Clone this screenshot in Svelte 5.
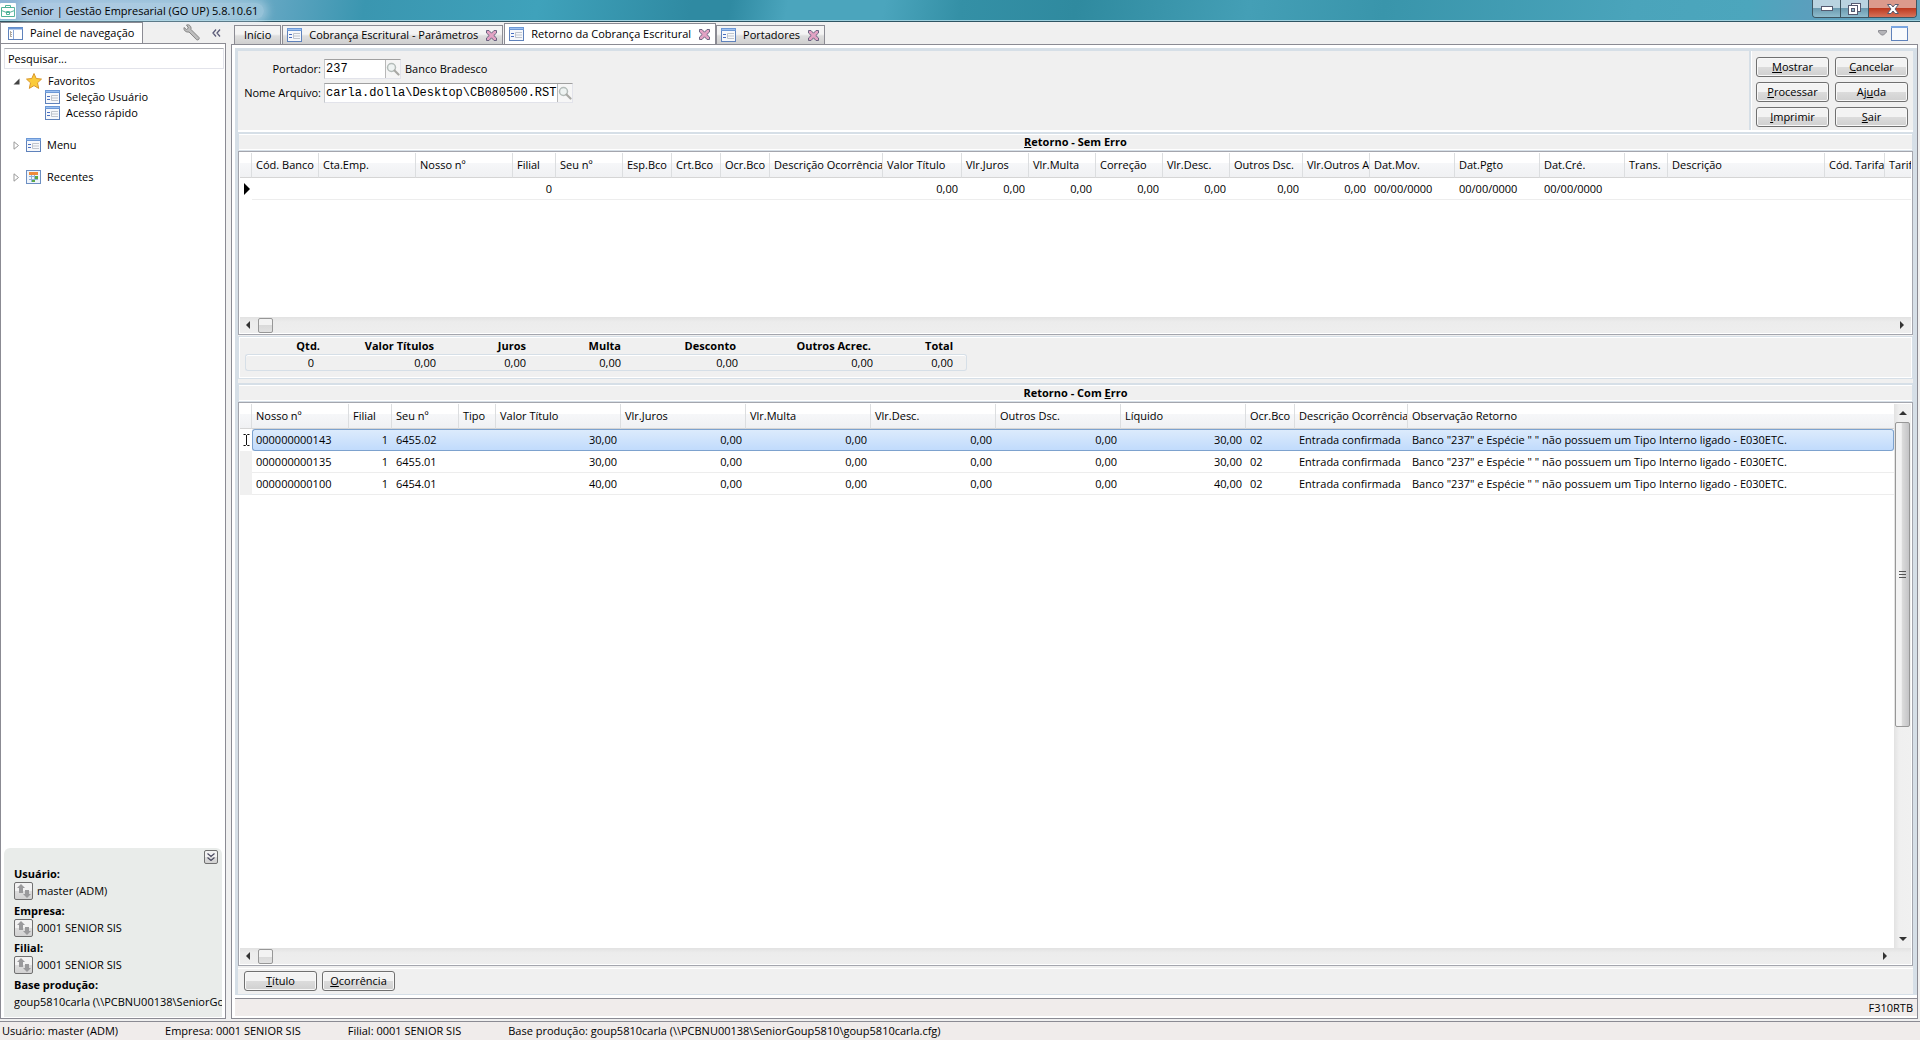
<script lang="ts">
    type Column = { label: string; width: number | null; align?: "right" };

    const tabs = [
        { label: "Início", icon: false, active: false },
        { label: "Cobrança Escritural - Parâmetros", icon: true, active: false },
        { label: "Retorno da Cobrança Escritural", icon: true, active: true },
        { label: "Portadores", icon: true, active: false },
    ];

    // label before the access key, the key, label after it
    const actions = [
        ["", "M", "ostrar"],
        ["", "C", "ancelar"],
        ["", "P", "rocessar"],
        ["Aj", "u", "da"],
        ["", "I", "mprimir"],
        ["", "S", "air"],
    ];

    const okColumns: Column[] = [
        { label: "Cód. Banco", width: 67 },
        { label: "Cta.Emp.", width: 97 },
        { label: "Nosso nº", width: 97 },
        { label: "Filial", width: 43, align: "right" },
        { label: "Seu nº", width: 67 },
        { label: "Esp.Bco", width: 49 },
        { label: "Crt.Bco", width: 49 },
        { label: "Ocr.Bco", width: 49 },
        { label: "Descrição Ocorrência", width: 113 },
        { label: "Valor Título", width: 79, align: "right" },
        { label: "Vlr.Juros", width: 67, align: "right" },
        { label: "Vlr.Multa", width: 67, align: "right" },
        { label: "Correção", width: 67, align: "right" },
        { label: "Vlr.Desc.", width: 67, align: "right" },
        { label: "Outros Dsc.", width: 73, align: "right" },
        { label: "Vlr.Outros A", width: 67, align: "right" },
        { label: "Dat.Mov.", width: 85 },
        { label: "Dat.Pgto", width: 85 },
        { label: "Dat.Cré.", width: 85 },
        { label: "Trans.", width: 43 },
        { label: "Descrição", width: 157 },
        { label: "Cód. Tarifa", width: 60 },
        { label: "Tarif", width: null },
    ];
    const okRow = ["", "", "", "0", "", "", "", "", "", "0,00", "0,00", "0,00", "0,00", "0,00", "0,00", "0,00",
        "00/00/0000", "00/00/0000", "00/00/0000", "", "", "", ""];

    const errorColumns: Column[] = [
        { label: "Nosso nº", width: 97 },
        { label: "Filial", width: 43, align: "right" },
        { label: "Seu nº", width: 67 },
        { label: "Tipo", width: 37 },
        { label: "Valor Título", width: 125, align: "right" },
        { label: "Vlr.Juros", width: 125, align: "right" },
        { label: "Vlr.Multa", width: 125, align: "right" },
        { label: "Vlr.Desc.", width: 125, align: "right" },
        { label: "Outros Dsc.", width: 125, align: "right" },
        { label: "Líquido", width: 125, align: "right" },
        { label: "Ocr.Bco", width: 49 },
        { label: "Descrição Ocorrência", width: 113 },
        { label: "Observação Retorno", width: null },
    ];
    const note = 'Banco "237" e Espécie " " não possuem um Tipo Interno ligado - E030ETC.';
    const errorRow = (id: string, seu: string, value: string) =>
        [id, "1", seu, "", value, "0,00", "0,00", "0,00", "0,00", value, "02", "Entrada confirmada", note];
    const errorRows = [
        errorRow("000000000143", "6455.02", "30,00"),
        errorRow("000000000135", "6455.01", "30,00"),
        errorRow("000000000100", "6454.01", "40,00"),
    ];

    const totals = [
        { label: "Qtd.", value: "0", width: 77 },
        { label: "Valor Títulos", value: "0,00", width: 122 },
        { label: "Juros", value: "0,00", width: 90 },
        { label: "Multa", value: "0,00", width: 95 },
        { label: "Desconto", value: "0,00", width: 117 },
        { label: "Outros Acrec.", value: "0,00", width: 135 },
        { label: "Total", value: "0,00", width: 86 },
    ];

    const session = [
        { label: "Usuário:", value: "master (ADM)" },
        { label: "Empresa:", value: "0001 SENIOR SIS" },
        { label: "Filial:", value: "0001 SENIOR SIS" },
    ];

    let search = $state("Pesquisar...");
    let holder = $state("237");
    let fileName = $state("carla.dolla\\Desktop\\CB080500.RST");
</script>

{#snippet formIcon()}
    <svg viewBox="0 0 15 14" width="15" height="14">
        <rect x="0.5" y="0.5" width="14" height="13" fill="#f6f8fb" stroke="#5f82bb" />
        <rect x="0" y="0" width="15" height="3" fill="#6c98d6" />
        <path d="M1 1.5h13" stroke="#9cc0f0" />
        <path d="M2 6.5h3M2 9.5h3" stroke="#4a6fc0" />
        <path d="M13 5.5h-6.5v5h6.5M7 8h6" fill="none" stroke="#bfc4cc" />
    </svg>
{/snippet}

{#snippet closeIcon()}
    <svg viewBox="0 0 11 11" width="11" height="11">
        <path d="M0.5 0.5h2.5l2.5 2.7 2.5-2.7h2.5v2.5l-2.7 2.5 2.7 2.5v2.5h-2.5l-2.5-2.7-2.5 2.7h-2.5v-2.5l2.7-2.5-2.7-2.5z" fill="#e3a3c4" stroke="#5f5a78" stroke-width="0.9" />
    </svg>
{/snippet}

{#snippet lensIcon()}
    <svg viewBox="0 0 14 14" width="14" height="14">
        <circle cx="5.5" cy="5.5" r="4" fill="#eef3f2" stroke="#b4bcb9" stroke-width="1.5" />
        <path d="M8.5 8.5l4 4" stroke="#a8a8a4" stroke-width="2.2" stroke-linecap="round" />
    </svg>
{/snippet}

{#snippet swapIcon()}
    <svg viewBox="0 0 14 14" width="14" height="14">
        <path d="M4 0l4 4H6v5H2V4H0z" fill="#9a9a9c" />
        <path d="M10 14l-4-4h2V6h4v4h2z" fill="#9a9a9c" />
    </svg>
{/snippet}

{#snippet scrollbar()}
    <div class="hscroll">
        <svg viewBox="0 0 4 8" width="4" height="8"><path d="M4 0v8L0 4z" fill="#333" /></svg>
        <div class="thumb"></div>
        <svg viewBox="0 0 4 8" width="4" height="8"><path d="M0 0v8l4-4z" fill="#333" /></svg>
    </div>
{/snippet}

{#snippet grid(columns: Column[], rows: string[][], editing: boolean)}
    <table>
        <colgroup>
            <col class="gutter" />
            {#each columns as column}
                <col style={column.width ? `width: ${column.width}px` : ""} />
            {/each}
        </colgroup>
        <thead>
            <tr>
                <th></th>
                {#each columns as column}
                    <th scope="col">{column.label}</th>
                {/each}
            </tr>
        </thead>
        <tbody>
            {#each rows as row, r}
                <tr class:selected={editing && r === 0}>
                    <td class="marker">
                        {#if r === 0 && editing}
                            <svg viewBox="0 0 7 12" width="7" height="12"><path d="M0.5 0.5h2l1 1l1-1h2M3.5 1v10M0.5 11.5h2l1-1l1 1h2" fill="none" stroke="#111" /></svg>
                        {:else if r === 0}
                            <svg viewBox="0 0 7 12" width="7" height="12"><path d="M1 0l6 6l-6 6z" fill="#000" /></svg>
                        {/if}
                    </td>
                    {#each row as cell, c}
                        <td class:right={columns[c].align === "right"}>{cell}</td>
                    {/each}
                </tr>
            {/each}
        </tbody>
    </table>
{/snippet}

<div class="window">
    <header class="titlebar">
        <svg viewBox="0 0 16 16" width="16" height="16">
            <rect width="16" height="16" rx="1" fill="#fff" />
            <path d="M5.5 4.5v-2h5v2M1.5 4.5h13v9h-13zM1.5 7.5l5 2h3l5-2M6.5 8.5h3v3h-3z" fill="none" stroke="#4fb298" />
        </svg>
        <span class="caption">Senior | Gestão Empresarial (GO UP) 5.8.10.61</span>
        <div class="window-buttons">
            <button aria-label="Minimizar"><svg viewBox="0 0 12 5" width="12" height="5"><rect x="0.5" y="0.5" width="11" height="4" fill="#fff" stroke="#555a70" /></svg></button>
            <button aria-label="Restaurar">
                <svg viewBox="0 0 13 12" width="13" height="12">
                    <rect x="3.5" y="0.5" width="9" height="8" fill="#fff" stroke="#555a70" />
                    <rect x="0.5" y="2.5" width="9" height="9" fill="#fff" stroke="#555a70" />
                    <rect x="3.5" y="5.5" width="3" height="3" fill="#8fb4c4" stroke="#555a70" />
                </svg>
            </button>
            <button class="close" aria-label="Fechar"><svg viewBox="0 0 12 10" width="12" height="10"><path d="M0.5 0.5H4l2 2.5 2-2.5h3.5L8 5l3.5 4.5H8L6 7 4 9.5H0.5L4 5z" fill="#fff" stroke="#555a70" /></svg></button>
        </div>
    </header>

    <div class="workspace">
        <aside>
            <div class="nav-head">
                <div class="nav-tab">
                    <svg viewBox="0 0 15 13" width="15" height="13">
                        <rect x="0.5" y="0.5" width="14" height="12" fill="#fff" stroke="#5f82bb" />
                        <path d="M0 1.5h15" stroke="#6c98d6" stroke-width="2" />
                        <path d="M5.5 3v9" stroke="#8aa7d6" />
                        <path d="M2.5 4v6M2 5.5h2M2 7.5h2M2 9.5h2" stroke="#b0aaa0" />
                    </svg>
                    Painel de navegação
                </div>
                <div class="nav-tools">
                    <svg viewBox="0 0 17 17" width="17" height="17">
                        <path d="M3.5 1c2.5-1 5 1 4.5 4.500l8 8c.8 1.500-.8 3-2.300 2.300L6 8C3 8.500.5 6.500 1 3.500l2.500 2L5.500 4z" fill="#bdbdbd" stroke="#858585" />
                    </svg>
                    <svg viewBox="0 0 9 8" width="9" height="8"><path d="M4 0.5l-3 3.5l3 3.5M8 0.5l-3 3.5l3 3.5" fill="none" stroke="#5b5b78" stroke-width="1.3" /></svg>
                </div>
            </div>
            <nav>
                <input class="search" aria-label="Pesquisar" bind:value={search} />
                <ul class="tree">
                    <li>
                        <div class="node">
                            <svg viewBox="0 0 7 7" width="7" height="7"><path d="M6.5 0.5v6h-6z" fill="#444" /></svg>
                            <svg viewBox="0 0 16 16" width="16" height="16"><path d="M8 .5l2.2 5 5.3.6-4 3.7 1.2 5.6L8 12.6l-4.7 2.8 1.2-5.6-4-3.7 5.3-.6z" fill="#fbcb3a" stroke="#d9962a" /></svg>
                            Favoritos
                        </div>
                        <ul>
                            <li class="leaf">{@render formIcon()}Seleção Usuário</li>
                            <li class="leaf">{@render formIcon()}Acesso rápido</li>
                        </ul>
                    </li>
                    <li>
                        <div class="node">
                            <svg viewBox="0 0 7 9" width="7" height="9"><path d="M1 0.8v7.4l4.5-3.7z" fill="#fff" stroke="#999" /></svg>
                            {@render formIcon()}
                            Menu
                        </div>
                    </li>
                    <li>
                        <div class="node">
                            <svg viewBox="0 0 7 9" width="7" height="9"><path d="M1 0.8v7.4l4.5-3.7z" fill="#fff" stroke="#999" /></svg>
                            <svg viewBox="0 0 15 14" width="15" height="14">
                                <rect x="0.5" y="0.5" width="14" height="13" fill="#eef4fb" stroke="#6d8fc2" />
                                <rect x="3" y="2" width="9" height="3" fill="#ee8b3a" />
                                <path d="M3 6.5h9M3 9.5h9M5.5 5v7M8.5 5v7" stroke="#8fb0d8" />
                                <path d="M9 6h3v3h-3zM6 10h3v2h-3z" fill="#5aa845" />
                            </svg>
                            Recentes
                        </div>
                    </li>
                </ul>
                <section class="session">
                    <button class="collapse" aria-label="Recolher">
                        <svg viewBox="0 0 8 8" width="8" height="8"><path d="M0.5 0.5l3.5 3l3.5-3M0.5 4.5l3.5 3l3.5-3" fill="none" stroke="#4a4a60" stroke-width="1.2" /></svg>
                    </button>
                    <dl>
                        {#each session as item}
                            <dt>{item.label}</dt>
                            <dd><button class="swap" aria-label="Trocar">{@render swapIcon()}</button>{item.value}</dd>
                        {/each}
                        <dt>Base produção:</dt>
                        <dd>goup5810carla (\\PCBNU00138\SeniorGou</dd>
                    </dl>
                </section>
            </nav>
        </aside>

        <main>
            <div class="tabs">
                {#each tabs as tab}
                    <div class="tab" class:active={tab.active}>
                        {#if tab.icon}{@render formIcon()}{/if}
                        <span>{tab.label}</span>
                        {#if tab.icon}<button class="tab-close" aria-label="Fechar aba">{@render closeIcon()}</button>{/if}
                    </div>
                {/each}
                <div class="tab-tools">
                    <svg viewBox="0 0 9 6" width="9" height="6"><path d="M0.5 0.5h8v1.5l-3 3h-2l-3-3z" fill="#b4b4b8" stroke="#8c8c92" /></svg>
                    <svg viewBox="0 0 17 15" width="17" height="15"><rect x="0.5" y="0.5" width="16" height="14" fill="#f8fafc" stroke="#5f82bb" /><path d="M0 1h17" stroke="#7aa5e0" stroke-width="2" /></svg>
                </div>
            </div>

            <div class="page">
                <div class="form">
                    <div class="filters">
                        <div class="fields">
                            <label for="holder">Portador:</label>
                            <div class="row">
                                <div class="lookup short">
                                    <input id="holder" bind:value={holder} />
                                    <button aria-label="Procurar portador">{@render lensIcon()}</button>
                                </div>
                                <span>Banco Bradesco</span>
                            </div>
                            <label for="file">Nome Arquivo:</label>
                            <div class="lookup long">
                                <input id="file" bind:value={fileName} />
                                <button aria-label="Procurar arquivo">{@render lensIcon()}</button>
                            </div>
                        </div>
                        <div class="actions">
                            {#each actions as [before, key, after]}
                                <button class="push">{before}<u>{key}</u>{after}</button>
                            {/each}
                        </div>
                    </div>

                    <h2><u>R</u>etorno - Sem Erro</h2>
                    <div class="grid ok">
                        <div class="view">{@render grid(okColumns, [okRow], false)}</div>
                        {@render scrollbar()}
                    </div>

                    <div class="totals">
                        <dl>
                            {#each totals as total}
                                <div style="width: {total.width}px">
                                    <dt class:long={total.label.length > 5}>{total.label}</dt>
                                    <dd>{total.value}</dd>
                                </div>
                            {/each}
                        </dl>
                    </div>

                    <h2>Retorno - Com <u>E</u>rro</h2>
                    <div class="grid errors">
                        <div class="body">
                            <div class="view">{@render grid(errorColumns, errorRows, true)}</div>
                            <div class="vscroll">
                                <svg viewBox="0 0 8 4" width="8" height="4"><path d="M0 4h8l-4-4z" fill="#333" /></svg>
                                <div class="vthumb">
                                    <svg viewBox="0 0 7 8" width="7" height="8"><path d="M0 0.5h7M0 3.5h7M0 6.5h7" stroke="#555" /></svg>
                                </div>
                                <svg viewBox="0 0 8 4" width="8" height="4"><path d="M0 0h8l-4 4z" fill="#333" /></svg>
                            </div>
                        </div>
                        {@render scrollbar()}
                    </div>

                    <div class="footer">
                        <button class="push"><u>T</u>ítulo</button>
                        <button class="push"><u>O</u>corrência</button>
                    </div>
                </div>
                <div class="form-status">F310RTB</div>
            </div>
        </main>
    </div>

    <footer class="statusbar">
        <span>Usuário: master (ADM)</span>
        <span>Empresa: 0001 SENIOR SIS</span>
        <span>Filial: 0001 SENIOR SIS</span>
        <span>Base produção: goup5810carla (\\PCBNU00138\SeniorGoup5810\goup5810carla.cfg)</span>
    </footer>
</div>

<style>
    :global(body) {
        margin: 0;
    }

    .window {
        display: flex;
        flex-direction: column;
        min-height: 100vh;
        background: #f0f0f0;
        color: #000;
        font: 11px/16px "Open Sans", "Noto Sans", sans-serif;
    }

    .window * {
        box-sizing: border-box;
    }

    svg {
        display: block;
        flex: none;
    }

    button,
    input {
        font: inherit;
        color: inherit;
        margin: 0;
        padding: 0;
    }

    ul,
    dl,
    dd,
    h2 {
        margin: 0;
        padding: 0;
        list-style: none;
    }

    /* Title bar */
    .titlebar {
        display: flex;
        align-items: center;
        gap: 5px;
        height: 22px;
        border-bottom: 1px solid #2f5563;
        box-shadow: inset 0 -1px #9ccfdd;
        background: linear-gradient(100deg, #8fb5d6 0, #86b6d0 10%, #5ba3bf 15%, #3a96b0 19%, #3fa2bb 28%, #2f8aa2 36%, #2f8aa2 38%, #4ba5bd 41%, #4ba5bd 46%, #3490a6 50%, #2f8a9f 56%, #449fb6 65%, #3995ab 72%, #4aa4bb 85%, #4ca6bd 91%, #5a9fbd 94%, #64a4be 100%);
    }

    .caption {
        padding-right: 6px;
        border-radius: 8px;
        background: rgba(220, 232, 248, 0.4);
        box-shadow: 0 0 8px 4px rgba(220, 232, 248, 0.4);
    }

    .window-buttons {
        display: flex;
        align-self: flex-start;
        margin: 0 3px 0 auto;
        height: 18px;
        border: 1px solid #3d5561;
        border-top: 0;
        border-radius: 0 0 4px 4px;
        overflow: hidden;
    }

    .window-buttons button {
        display: flex;
        align-items: center;
        justify-content: center;
        width: 28px;
        border: 0;
        border-right: 1px solid #3d5561;
        background: linear-gradient(#b9d3e0 45%, #6c9bb0 50%, #8fbccd);
    }

    .window-buttons .close {
        width: 47px;
        border-right: 0;
        background: linear-gradient(#dc9a8c 45%, #bd3a20 50%, #d6735a);
    }

    .workspace {
        display: flex;
        flex: 1;
        gap: 5px;
        padding-bottom: 2px;
    }

    /* Navigation panel */
    aside {
        display: flex;
        flex-direction: column;
        flex: none;
        width: 226px;
    }

    .nav-head {
        display: flex;
        align-items: center;
        justify-content: space-between;
        height: 21px;
    }

    .nav-tab {
        display: flex;
        flex: none;
        align-items: center;
        gap: 7px;
        width: 143px;
        height: 21px;
        padding-left: 7px;
        border: 1px solid #8b8b93;
        border-bottom: 0;
        background: #fff;
    }

    .nav-tools {
        display: flex;
        align-items: center;
        gap: 12px;
        padding-right: 5px;
    }

    nav {
        display: flex;
        flex: 1;
        flex-direction: column;
        border: 1px solid #8b8b93;
        padding: 4px 1px 1px 3px;
        background: #fff;
    }

    .search {
        height: 21px;
        padding: 0 3px;
        border: 1px solid #e2e3ea;
        border-top-color: #abadb3;
        outline: 0;
    }

    .tree {
        flex: 1;
        padding: 4px 8px 0 9px;
    }

    .tree > li {
        margin-bottom: 16px;
    }

    .node,
    .leaf {
        display: flex;
        align-items: center;
        gap: 6px;
        height: 16px;
    }

    .leaf {
        padding-left: 32px;
    }

    .session {
        position: relative;
        margin-right: 2px;
        padding: 18px 0 3px 10px;
        border-radius: 6px 6px 0 0;
        background: #e9ecea;
    }

    .collapse,
    .swap {
        display: flex;
        align-items: center;
        justify-content: center;
        border: 1px solid #707070;
        border-radius: 2px;
        background: linear-gradient(#f2f2f2 50%, #dddddd 50%, #d2d2d2);
    }

    .collapse {
        position: absolute;
        top: 2px;
        right: 4px;
        width: 14px;
        height: 14px;
    }

    .session dt {
        font-weight: 700;
    }

    .session dd {
        display: flex;
        align-items: center;
        gap: 4px;
        height: 21px;
        padding-bottom: 3px;
        white-space: nowrap;
        overflow: hidden;
    }

    .swap {
        width: 19px;
        height: 18px;
    }

    /* Tabs */
    main {
        display: flex;
        flex: 1;
        flex-direction: column;
        min-width: 0;
        padding-right: 2px;
    }

    .tabs {
        display: flex;
        align-items: flex-end;
        height: 22px;
        padding-left: 3px;
    }

    .tab {
        display: flex;
        align-items: center;
        gap: 7px;
        height: 19px;
        margin-right: 1px;
        padding: 0 5px 0 4px;
        border: 1px solid #8b8b93;
        border-bottom: 0;
        background: linear-gradient(#f4f4f4 45%, #dedede 55%, #cfcfcf);
        white-space: nowrap;
    }

    .tab:first-child {
        padding: 0 9px;
    }

    .tab.active {
        height: 21px;
        margin-right: 0;
        background: #fff;
    }

    .tab-close {
        margin-left: 1px;
        border: 0;
        background: none;
    }

    .tab-tools {
        display: flex;
        align-self: center;
        align-items: center;
        gap: 4px;
        margin-left: auto;
        padding-right: 10px;
    }

    .page {
        display: flex;
        flex: 1;
        flex-direction: column;
        border: 1px solid #8b8b93;
        background: #fff;
    }

    .form {
        display: flex;
        flex: 1;
        flex-direction: column;
        margin: 3px 0 3px 3px;
        border: 3px solid #d6dfe7;
        border-right-width: 4px;
        border-bottom-width: 1px;
        background: #f0f0f0;
    }

    /* Filters */
    .filters {
        display: flex;
        justify-content: space-between;
        height: 81px;
        border-bottom: 2px solid #fff;
    }

    .fields {
        display: grid;
        grid-template-columns: 83px auto;
        grid-auto-rows: 20px;
        align-content: start;
        align-items: center;
        gap: 4px 3px;
        padding-top: 8px;
    }

    .fields label {
        text-align: right;
        white-space: nowrap;
    }

    .row {
        display: flex;
        align-items: center;
        gap: 4px;
    }

    .lookup {
        display: flex;
        height: 20px;
        border: 1px solid #e2e3ea;
        border-top-color: #a0a0a0;
        border-left-color: #c4c8cc;
        background: #fff;
    }

    .lookup.short {
        width: 77px;
    }

    .lookup.long {
        width: 249px;
    }

    .lookup input {
        flex: 1;
        min-width: 0;
        padding-left: 1px;
        border: 0;
        outline: 0;
        background: none;
        font: 12px/16px "Liberation Mono", monospace;
    }

    .lookup button {
        display: flex;
        align-items: center;
        justify-content: center;
        width: 15px;
        border: 0;
        border-left: 1px solid #b8b8b8;
        background: #f6f6f6;
    }

    .actions {
        display: grid;
        grid-template-columns: 73px 73px;
        align-content: start;
        gap: 5px 6px;
        padding: 6px 5px 0;
        border-left: 2px solid #d6dfe7;
        box-shadow: inset 1px 0 #fff;
    }

    .push {
        width: 73px;
        height: 20px;
        border: 1px solid #707070;
        border-radius: 3px;
        background: linear-gradient(#f3f3f3 50%, #dcdcdc 50%, #d0d0d0);
        box-shadow: inset 0 0 0 1px #f8f8f8;
        line-height: 18px;
    }

    /* Grids */
    h2 {
        height: 19px;
        border: 1px solid #d6dfe7;
        border-top-width: 2px;
        box-shadow: inset 0 1px #fff, inset 0 -1px #fff;
        font: 700 11px/16px "Open Sans", "Noto Sans", sans-serif;
        text-align: center;
    }

    .grid {
        display: flex;
        flex-direction: column;
        border: 1px solid #a4a6ae;
        padding: 1px;
        background: #fff;
    }

    .grid.ok {
        height: 184px;
    }

    .grid.errors {
        flex: 1;
    }

    .view {
        flex: 1;
        min-width: 0;
        overflow: hidden;
    }

    .body {
        display: flex;
        flex: 1;
    }

    table {
        width: 100%;
        table-layout: fixed;
        border-collapse: separate;
        border-spacing: 0;
    }

    .gutter {
        width: 12px;
    }

    th,
    td {
        padding: 0 4px;
        overflow: hidden;
        white-space: nowrap;
        text-align: left;
        font-weight: 400;
    }

    th {
        height: 25px;
        padding-right: 0;
        border-right: 1px solid #dcdee0;
        border-bottom: 1px solid #d5d5d5;
        background: linear-gradient(#fff 40%, #f6f7f9 42%, #f0f1f3);
    }

    th:last-child {
        border-right: 0;
    }

    td {
        height: 22px;
        border-bottom: 1px solid #ededed;
    }

    .right {
        text-align: right;
    }

    .marker {
        padding: 0 3px;
        border-bottom: 0;
        background: #f0f0f0;
    }

    .ok .marker {
        background: #fff;
    }

    .selected td:not(.marker) {
        border-top: 1px solid #7da2ce;
        border-bottom: 1px solid #7da2ce;
        background: linear-gradient(#dcebfc, #c1dbfc);
    }

    .selected .marker {
        background: #fff;
    }

    .selected td:nth-child(2) {
        border-left: 1px solid #7da2ce;
        border-radius: 3px 0 0 3px;
        padding-left: 3px;
    }

    .selected td:last-child {
        border-right: 1px solid #7da2ce;
        border-radius: 0 3px 3px 0;
    }

    .hscroll {
        display: flex;
        align-items: center;
        height: 16px;
        padding: 0 7px 0 6px;
        background: linear-gradient(#e2e2e2, #ececec 30%, #eeeeee);
    }

    .errors .hscroll {
        padding-right: 24px;
    }

    .thumb {
        width: 15px;
        height: 15px;
        margin: 0 auto 0 8px;
        border: 1px solid #979797;
        border-radius: 2px;
        background: linear-gradient(#f3f3f3 50%, #dadada 50%, #e2e2e2);
    }

    .vscroll {
        display: flex;
        flex-direction: column;
        align-items: center;
        width: 17px;
        padding: 7px 0;
        background: linear-gradient(90deg, #e2e2e2, #efefef 30%, #f0f0f0);
    }

    .vthumb {
        display: flex;
        align-items: center;
        justify-content: center;
        width: 15px;
        height: 305px;
        margin: 7px 0 auto;
        border: 1px solid #979797;
        border-radius: 2px;
        background: linear-gradient(90deg, #f3f3f3 40%, #dadada 50%, #c4c4c6);
    }

    /* Totals */
    .totals {
        height: 43px;
        margin: 1px 0 4px;
        padding: 1px 6px 0;
        border: 1px solid #d6dfe7;
        box-shadow: inset 0 0 0 1px #fff;
    }

    .totals dl {
        display: flex;
    }

    .totals div {
        text-align: right;
    }

    .totals dt {
        padding-right: 8px;
        font-weight: 700;
    }

    .totals dt.long {
        padding-right: 10px;
    }

    .totals div:first-child dt {
        padding-right: 2px;
    }

    .totals div:last-child dt {
        padding-right: 14px;
    }

    .totals dd {
        height: 17px;
        padding-right: 8px;
        border: 1px solid #d6dfe7;
        border-width: 1px 0;
        box-shadow: inset 0 1px #fff;
    }

    .totals div:first-child dd {
        border-left-width: 1px;
        border-radius: 3px 0 0 3px;
    }

    .totals div:last-child dd {
        padding-right: 13px;
        border-right-width: 1px;
        border-radius: 0 3px 3px 0;
    }

    .footer {
        display: flex;
        gap: 5px;
        margin-top: 2px;
        padding: 2px 6px 3px;
        border-top: 1px solid #fff;
    }

    .form-status {
        height: 20px;
        margin-left: 3px;
        padding-right: 4px;
        border-top: 1px solid #8b8b93;
        border-bottom: 2px solid #fff;
        background: #f0eceb;
        line-height: 17px;
        text-align: right;
    }

    .statusbar {
        display: flex;
        height: 19px;
        gap: 47px;
        padding-left: 2px;
        border-top: 1px solid #8b8b93;
        background: #f0eceb;
        line-height: 18px;
    }
</style>
